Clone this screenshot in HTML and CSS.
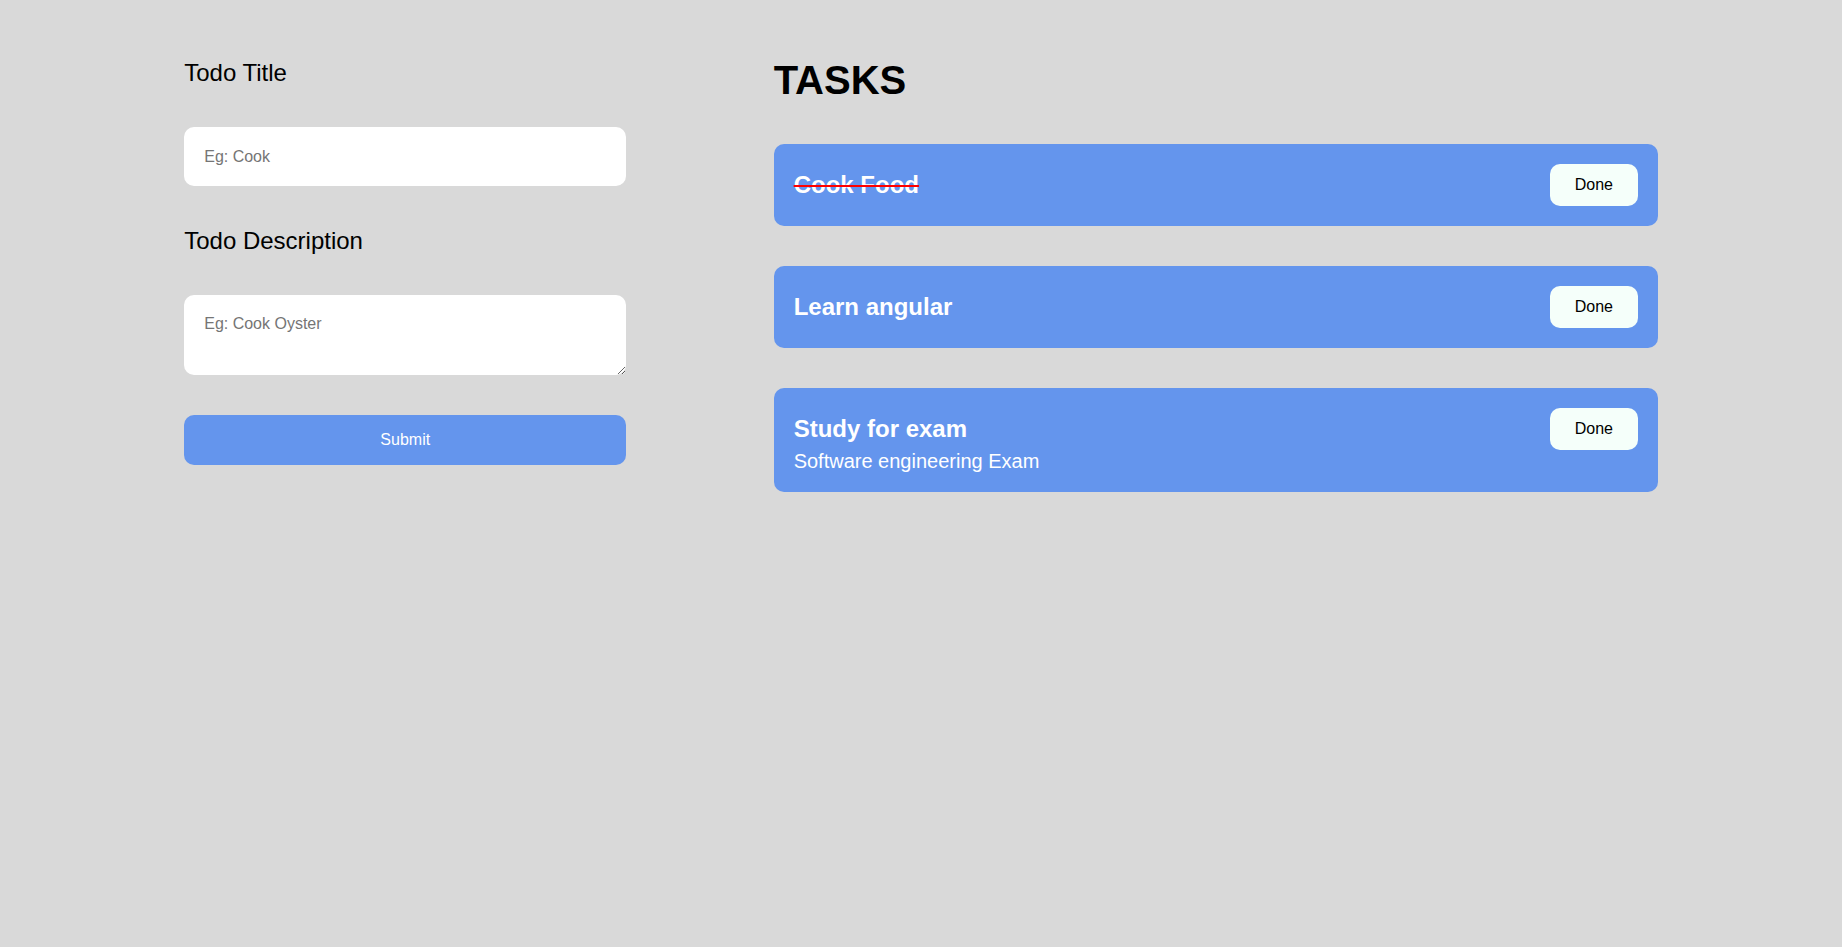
FILE: index.html
```html
<!DOCTYPE html>
<html lang="en">
<head>
<meta charset="utf-8">
<title>Todo</title>
<link rel="stylesheet" href="styles.css">
</head>
<body>
<div class="page">
  <form class="form" onsubmit="return false">
    <label class="label" for="title">Todo Title</label>
    <input id="title" class="field" type="text" placeholder="Eg: Cook">
    <label class="label" for="desc">Todo Description</label>
    <textarea id="desc" class="field area" placeholder="Eg: Cook Oyster"></textarea>
    <button class="submit" type="submit">Submit</button>
  </form>
  <section class="tasks">
    <h1 class="heading">TASKS</h1>
    <div class="list">
      <div class="card">
        <div class="info">
          <div class="task-title done">Cook Food</div>
        </div>
        <button class="done-btn">Done</button>
      </div>
      <div class="card">
        <div class="info">
          <div class="task-title">Learn angular</div>
        </div>
        <button class="done-btn">Done</button>
      </div>
      <div class="card">
        <div class="info">
          <div class="task-title">Study for exam</div>
          <div class="task-desc">Software engineering Exam</div>
        </div>
        <button class="done-btn">Done</button>
      </div>
    </div>
  </section>
</div>
</body>
</html>
```

FILE: styles.css
```css
html, body {
  margin: 0;
  padding: 0;
  background: #d9d9d9;
  font-family: "Liberation Sans", Arial, sans-serif;
  color: #000;
}

.page {
  width: 80%;
  margin: 0 auto;
  padding-top: 58px;
  display: grid;
  grid-template-columns: 30% 60%;
  justify-content: space-between;
  align-items: start;
}

.form {
  display: flex;
  flex-direction: column;
}

.label {
  font-size: 24px;
  line-height: 28px;
  margin: 1px 0 40px;
}

.field {
  box-sizing: border-box;
  width: 100%;
  height: 59px;
  border: none;
  border-radius: 10px;
  background: #fff;
  padding: 0 20px;
  font-family: "Liberation Sans", Arial, sans-serif;
  font-size: 16px;
  margin: 0 0 40px;
  outline: none;
}

.field::placeholder {
  color: #757575;
}

.area {
  height: 80px;
  padding: 20px;
  resize: vertical;
  display: block;
}

.submit {
  height: 50px;
  border: none;
  border-radius: 10px;
  background: #6495ed;
  color: #fff;
  font-family: "Liberation Sans", Arial, sans-serif;
  font-size: 16px;
}

.heading {
  margin: 0;
  font-size: 40px;
  line-height: 44px;
  font-weight: bold;
}

.list {
  margin-top: 42px;
  display: flex;
  flex-direction: column;
  gap: 40px;
}

.card {
  background: #6495ed;
  border-radius: 10px;
  padding: 20px;
  display: flex;
  justify-content: space-between;
  align-items: flex-start;
}

.task-title {
  color: #fff;
  font-size: 24px;
  font-weight: bold;
  line-height: 42px;
}

.task-title.done {
  text-decoration: line-through;
  text-decoration-color: #ff0000;
  text-decoration-thickness: 2px;
}

.task-desc {
  color: #fff;
  font-size: 20px;
  line-height: 22px;
}

.done-btn {
  width: 88px;
  height: 42px;
  border: none;
  border-radius: 10px;
  background: #f5fffa;
  color: #000;
  font-family: "Liberation Sans", Arial, sans-serif;
  font-size: 16px;
  flex: none;
}
```
